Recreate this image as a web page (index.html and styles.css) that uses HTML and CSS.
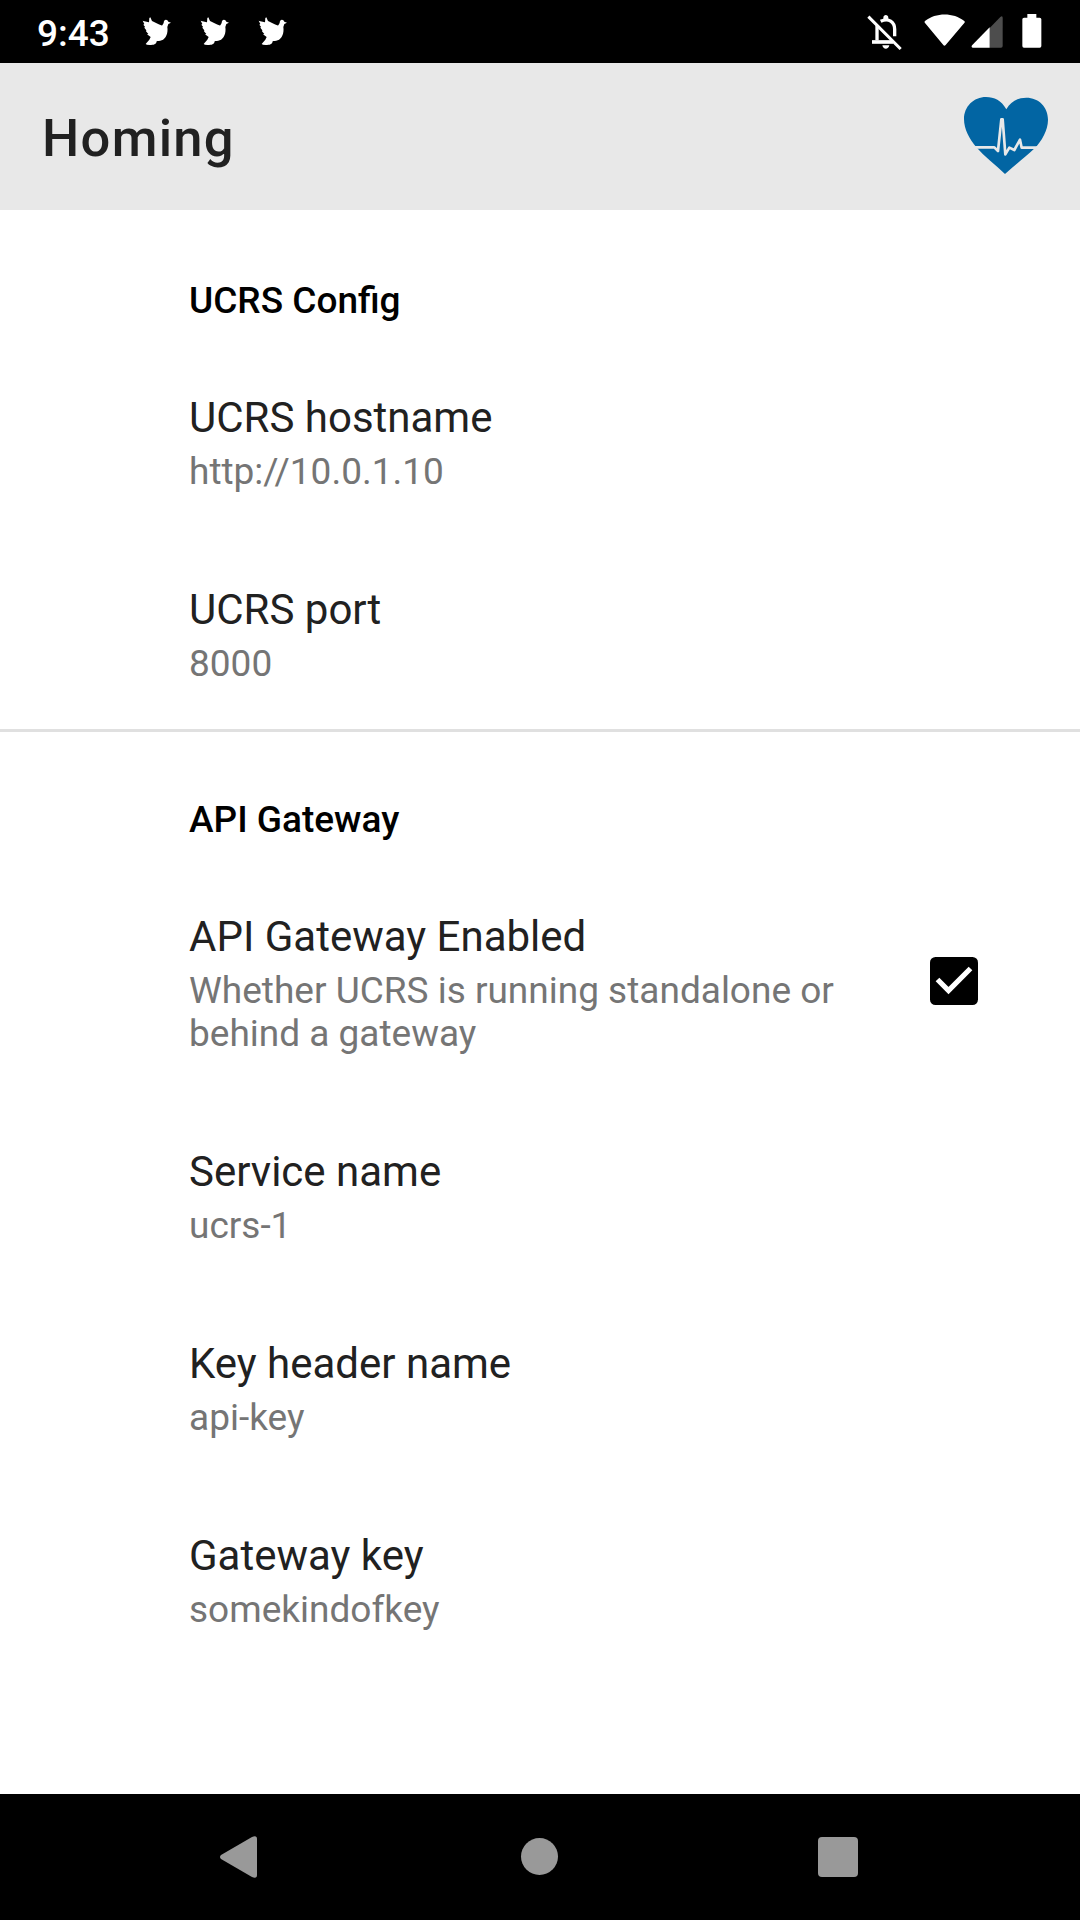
FILE: index.html
```html
<!DOCTYPE html>
<html lang="en">
<head>
<meta charset="utf-8">
<title>Homing</title>
<link rel="stylesheet" href="styles.css">
</head>
<body>
<svg class="defs" aria-hidden="true">
  <symbol id="bird" viewBox="37 35 90 87"><path d="M39 46 Q41 47 44 48 L58 51 L59 38 L62 36 L67 47 L87 57 Q95 61 98 60 L102 53 Q102 44 109 43 Q114 43 116 49 L124 52 L116 56 L113 65 C116 84 108 101 96 105 C90 108 84 107 81 108 C80 118 72 119 60 119 Q50 119 48 116 L59 103 L63 95 L52 87 L56 86 L49 78 L50 75 L44 67 L46 64 L41 58 L44 56 Z"/></symbol>
</svg>
<header class="status">
  <div class="status-left">
    <span class="clock">9:43</span>
    <svg class="bird"><use href="#bird"/></svg>
    <svg class="bird"><use href="#bird"/></svg>
    <svg class="bird"><use href="#bird"/></svg>
  </div>
  <div class="status-right">
    <svg class="bell" viewBox="80 42 104 109">
      <g fill="none" stroke="#fff">
        <path d="M84 50 L181 147" stroke-width="9"/>
        <path d="M95 126 H158" stroke-width="11"/>
        <path d="M110 121 V76" stroke-width="10"/>
        <path d="M121 64 C145 52 163 66 163 88 V109" stroke-width="10"/>
      </g>
      <path fill="#fff" d="M129 58 V53 C129 42 144 42 144 53 V58 Z M126 136 H147 C145 150 128 150 126 136 Z"/>
    </svg>
    <svg class="wifi" viewBox="252 41 124 97"><path fill="#fff" d="M255 62 C288 36 340 36 373 62 Q376 65 373 68 L317 134 Q313 139 310 134 L255 68 Q252 65 255 62 Z"/></svg>
    <svg class="signal" viewBox="391 46 96 96"><path fill="#4d4d4d" d="M447 82 L479 49 Q486 44 486 52 V136 Q486 141 481 141 H447 Z"/><path fill="#fff" d="M447 80 V141 H396 Q390 139 395 133 Z"/></svg>
    <svg class="battery" viewBox="545 42 59 102"><path fill="#fff" d="M561 42 H588 V53 H598 Q603 53 603 58 V138 Q603 143 598 143 H551 Q546 143 546 138 V58 Q546 53 551 53 H561 Z"/></svg>
  </div>
</header>
<div class="toolbar">
  <h1 class="toolbar-title">Homing</h1>
  <svg class="heart" viewBox="72 51 252 231">
    <path fill="#0265a3" d="M199 88 C184 61 163 51 138 51 C101 51 72 80 72 117 C72 148 88 176 109 202 C133 229 165 254 195 282 C226 254 258 230 284 205 C305 183 324 151 324 119 C324 81 296 53 259 53 C232 53 212 65 199 88 Z"/>
    <path fill="none" stroke="#e8e8e8" stroke-width="8" stroke-linejoin="round" d="M104 202 H163 L174 213 L184 118 L188 118 L196 223 L208 203 L223 210 L240 179 L245 203 H295"/>
  </svg>
</div>
<main class="settings">
  <section class="group">
    <h2 class="category">UCRS Config</h2>
    <div class="item"><div class="label">UCRS hostname</div><div class="summary">http://10.0.1.10</div></div>
    <div class="item"><div class="label">UCRS port</div><div class="summary">8000</div></div>
  </section>
  <section class="group">
    <h2 class="category">API Gateway</h2>
    <div class="item item-check">
      <div class="item-text"><div class="label">API Gateway Enabled</div><div class="summary">Whether UCRS is running standalone or behind a gateway</div></div>
      <svg class="checkbox" viewBox="0 0 48 48"><rect width="48" height="48" rx="5.5"/><path d="M7.5 22.5 L18.5 33.5 L40.5 11.5" fill="none" stroke="#fff" stroke-width="5.2"/></svg>
    </div>
    <div class="item"><div class="label">Service name</div><div class="summary">ucrs-1</div></div>
    <div class="item"><div class="label">Key header name</div><div class="summary">api-key</div></div>
    <div class="item"><div class="label">Gateway key</div><div class="summary">somekindofkey</div></div>
  </section>
</main>
<nav class="navbar">
  <svg class="back" viewBox="0 0 37 42"><path fill="#999" d="M1 19 L32 1 Q37 -1 37 3 V39 Q37 43 32 41 L1 23 Q-1 21 1 19 Z"/></svg>
  <span class="home"></span>
  <span class="recents"></span>
</nav>
</body>
</html>
```
FILE: styles.css
```css
* { box-sizing: border-box; margin: 0; }
body {
  width: 1080px;
  height: 1920px;
  display: flex;
  flex-direction: column;
  background: #fff;
  font-family: Roboto, sans-serif;
  overflow: hidden;
}
svg { display: block; flex: none; }
.defs { display: none; }

.status {
  height: 63px;
  flex: none;
  display: flex;
  justify-content: space-between;
  background: #000;
  color: #fff;
  padding: 0 38.5px 0 37px;
}
.status-left { display: flex; gap: 28px; padding-top: 17px; }
.clock { width: 77px; height: 29px; line-height: 33px; font-size: 37px; font-weight: 500; white-space: nowrap; }
.bird { width: 30px; height: 29px; fill: #fff; }
.status-right { display: flex; padding-top: 14px; }
.bell { width: 34.7px; height: 36.3px; margin-right: 22.6px; }
.wifi { width: 41.3px; height: 32.3px; margin-right: 5px; }
.signal { width: 32px; height: 32px; margin: 1.5px 19.3px 0 0; }
.battery { width: 19.7px; height: 34px; }

.toolbar {
  height: 147px;
  flex: none;
  display: flex;
  justify-content: space-between;
  align-items: flex-start;
  background: #e8e8e8;
  padding: 34px 32px 0 42px;
}
.toolbar-title { font-size: 52.5px; line-height: 82px; font-weight: 500; letter-spacing: 1.3px; color: #212121; }
.heart { width: 84px; height: 77px; }

.settings { flex: 1; padding-top: 3px; }
.group + .group { border-top: 3px solid #e0e0e0; }
.category {
  height: 132px;
  padding: 66px 0 0 189px;
  font-size: 37px;
  line-height: 43px;
  font-weight: 500;
  color: #000;
}
.item { padding: 41px 42px 44px 189px; }
.item-check { display: flex; justify-content: space-between; align-items: center; padding-right: 102px; }
.item-text { width: 680px; }
.label { font-size: 42px; line-height: 64px; color: #212121; }
.summary { font-size: 37px; line-height: 43px; color: #757575; }
.checkbox { width: 48px; height: 48px; margin-top: 2px; }

.navbar {
  height: 126px;
  flex: none;
  display: flex;
  align-items: center;
  background: #000;
  padding-left: 220px;
}
.back { width: 37px; height: 42px; }
.home { width: 37px; height: 37px; margin: 0 0 1px 264px; border-radius: 50%; background: #999; }
.recents { width: 40px; height: 40px; margin-left: 260px; border-radius: 4px; background: #999; }
```
